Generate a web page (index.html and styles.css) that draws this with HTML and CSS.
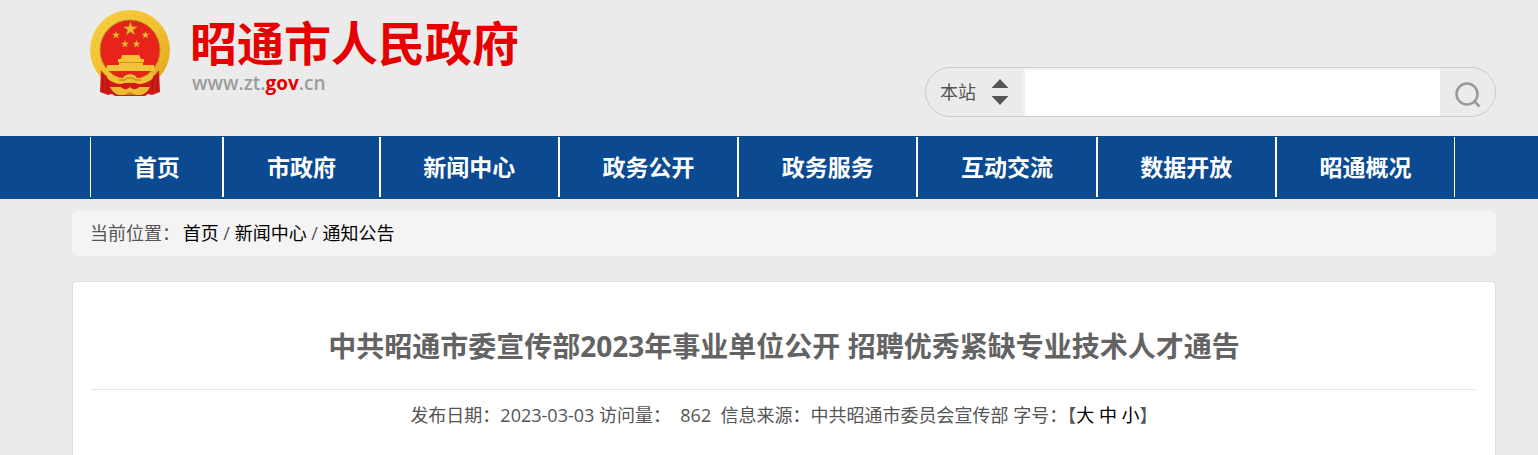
FILE: index.html
```html
<!DOCTYPE html>
<html lang="zh-CN">
<head>
    <meta charset="UTF-8">
    <meta name="viewport" content="width=device-width, initial-scale=1.0">
    <title>昭通市人民政府</title>
    <link rel="stylesheet" href="styles.css">
</head>
<body>
    <header class="header wrap">
        <a class="logo" href="#">
            <svg class="emblem" viewBox="0 0 80 88" aria-hidden="true">
                <defs>
                    <linearGradient id="gold" x1="0" y1="0" x2="1" y2="1">
                        <stop offset="0" stop-color="#f7cf45"/>
                        <stop offset="0.5" stop-color="#f2c230"/>
                        <stop offset="1" stop-color="#dfa320"/>
                    </linearGradient>
                    <path id="star" d="M0-10 2.300-3.200 9.500-3.100 3.800 1.200 5.900 8.100 0 4-5.900 8.100-3.800 1.200-9.500-3.100-2.300-3.200Z"/>
                </defs>
                <circle cx="40" cy="40" r="40" fill="url(#gold)"/>
                <circle cx="40" cy="40" r="35" fill="none" stroke="#e9b52b" stroke-dasharray="2 5"/>
                <circle cx="40" cy="40" r="30" fill="#e8231b" stroke="#b98a1c" stroke-width="1"/>
                <g fill="#f0b92c" stroke="#a8541a" stroke-width="0.5">
                    <use href="#star" transform="translate(40.500 19) scale(.76)"/>
                    <use href="#star" transform="translate(26 25) scale(.42)"/>
                    <use href="#star" transform="translate(55.500 25) scale(.42)"/>
                    <use href="#star" transform="translate(35 34) scale(.42)"/>
                    <use href="#star" transform="translate(46.500 34) scale(.42)"/>
                </g>
                <!-- 城楼 -->
                <g fill="#f3c437">
                    <path d="M32 45h17l2 4h3v3l-1 .5V55h11l1 6H16l1-6h12v-2.500l-1-.5v-3h3z"/>
                    <path d="M29 52.500h24" stroke="#d98c22" stroke-width="1"/>
                </g>
                <!-- 绶带与齿轮 -->
                <path d="M11 60c4 6 11 11 19 13h20c8-2 15-7 19-13l1 22-8 3-4-1-3 2H25l-3-2-4 1-8-3Z" fill="#d01a16"/>
                <path d="M13 65v17M17 69l1 14M67 65v17M63 69l-1 14" stroke="#a81410" stroke-width="1"/>
                <path d="M18 62c4 4 9 6 15 6 2-5 12-5 14 0 6 0 11-2 15-6l1 6c-4 4-9 6-15 6l-4-2h-8l-4 2c-6 0-11-2-15-6Z" fill="#f0c135"/>
                <path d="M20 77h11c3 3 6 3 9 0 3 3 6 3 9 0h11c-2 4-5 7-9 8H29c-4-1-7-4-9-8Z" fill="#eebc33"/>
                <path d="M29 70h6l2-2h6l2 2h6" fill="none" stroke="#b8701d"/>
                <path d="m34 85 6-3 6 3Z" fill="#c9831f"/>
            </svg>
            <span class="logo-text">
                <span class="site-name">昭通市人民政府</span>
                <span class="site-url">www.zt.<em>gov</em>.cn</span>
            </span>
        </a>
        <form class="search">
            <label class="scope">
                <select aria-label="搜索范围">
                    <option>本站</option>
                </select>
                <svg viewBox="0 0 16 26" aria-hidden="true">
                    <path d="M8 0 16.500 9h-17zM8 26l8.500-9h-17z" fill="#555"/>
                </svg>
            </label>
            <input type="text" aria-label="搜索关键字">
            <button type="submit" aria-label="搜索">
                <svg viewBox="0 0 26 26" fill="none" stroke="#999" stroke-width="2.500" aria-hidden="true">
                    <circle cx="12" cy="12" r="10.500"/>
                    <path d="m19.500 19.500 5 5"/>
                </svg>
            </button>
        </form>
    </header>

    <nav class="nav">
        <ul class="wrap">
            <li><a href="#">首页</a></li>
            <li><a href="#">市政府</a></li>
            <li><a href="#">新闻中心</a></li>
            <li><a href="#">政务公开</a></li>
            <li><a href="#">政务服务</a></li>
            <li><a href="#">互动交流</a></li>
            <li><a href="#">数据开放</a></li>
            <li><a href="#">昭通概况</a></li>
        </ul>
    </nav>

    <div class="position wrap">
        <span class="label">当前位置：</span>
        <a href="#">首页</a> / <a href="#">新闻中心</a> / <a href="#">通知公告</a>
    </div>

    <main class="article wrap">
        <h1>中共昭通市委宣传部2023年事业单位公开 招聘优秀紧缺专业技术人才通告</h1>
        <p class="meta">发布日期：2023-03-03 访问量：&nbsp; 862 &nbsp;信息来源：中共昭通市委员会宣传部 字号：【<a href="#">大</a> <a href="#">中</a> <a href="#">小</a>】</p>
    </main>
</body>
</html>
```

FILE: styles.css
```css
* {
    box-sizing: border-box;
}

body {
    margin: 0;
    background: #ebebeb;
    color: #555;
    font-family: "Open Sans", "Noto Sans CJK SC", sans-serif;
    font-size: 18px;
    line-height: 24px;
}

a {
    color: #000;
    text-decoration: none;
}

.wrap {
    margin: 0 42px 0 72px;
}

/* 页头 */
.header {
    display: flex;
    justify-content: space-between;
    align-items: flex-end;
    height: 136px;
    padding: 10px 0 19px 18px;
}

.logo {
    display: flex;
    align-self: flex-start;
    gap: 20px;
}

.emblem {
    width: 80px;
    height: 88px;
}

.logo-text {
    display: flex;
    flex-direction: column;
    padding-top: 4px;
}

.site-name {
    color: #e60000;
    font-family: "Noto Sans CJK SC", sans-serif;
    font-size: 47px;
    font-weight: bold;
    line-height: 54px;
    white-space: nowrap;
}

.site-url {
    padding-left: 2px;
    color: #9c9c9c;
    font-size: 19px;
    font-weight: 600;
    line-height: 30px;
}

.site-url em {
    color: #e60000;
    font-style: normal;
    font-weight: bold;
}

.search {
    display: flex;
    flex: 0 1 571px;
    height: 50px;
    border: 1px solid #ccc;
    border-radius: 25px;
    overflow: hidden;
}

.scope {
    display: flex;
    align-items: center;
    width: 97px;
    padding-left: 14px;
    gap: 15px;
}

.scope select {
    width: 37px;
    padding: 0;
    border: 0;
    background: none;
    color: #555;
    font: inherit;
    appearance: none;
}

.scope svg {
    width: 16px;
    height: 26px;
    overflow: visible;
}

.search input {
    flex: 1;
    min-width: 0;
    padding: 0 10px;
    border: 1px solid #f2f2f2;
    border-width: 2px 0 0 2px;
    background: #fff;
    font: inherit;
}

.search button {
    width: 55px;
    padding: 8px 0 0;
    border: 0;
    background: none;
    cursor: pointer;
}

.search button svg {
    width: 26px;
    height: 26px;
}

/* 导航 */
.nav {
    padding: 1px 0 2px;
    background: #0b4a91;
}

.nav ul {
    display: flex;
    padding: 0 41px 0 18px;
    list-style: none;
}

.nav li {
    flex: 1 1 auto;
    border: 1px solid #fff;
    border-width: 0 1px;
}

.nav a {
    display: block;
    color: #fff;
    font-size: 23px;
    font-weight: bold;
    line-height: 60px;
    padding: 0 42px;
    text-align: center;
    white-space: nowrap;
}

/* 当前位置 */
.position {
    margin-top: 12px;
    padding: 10px 18px 11px;
    border-radius: 5px;
    background: #f4f4f4;
}

.label {
    margin-right: -2px;
}

/* 正文 */
.article {
    margin-top: 25px;
    padding: 44px 19px 0;
    border: 1px solid #dcdcdc;
    border-bottom: 0;
    border-radius: 5px 5px 0 0;
    background: #fff;
    text-align: center;
}

.article h1 {
    margin: 0;
    padding-bottom: 23px;
    border-bottom: 1px dotted #ccc;
    color: #636363;
    font-size: 28px;
    line-height: 40px;
}

.meta {
    margin: 0;
    padding: 13px 0 28px;
}
```
